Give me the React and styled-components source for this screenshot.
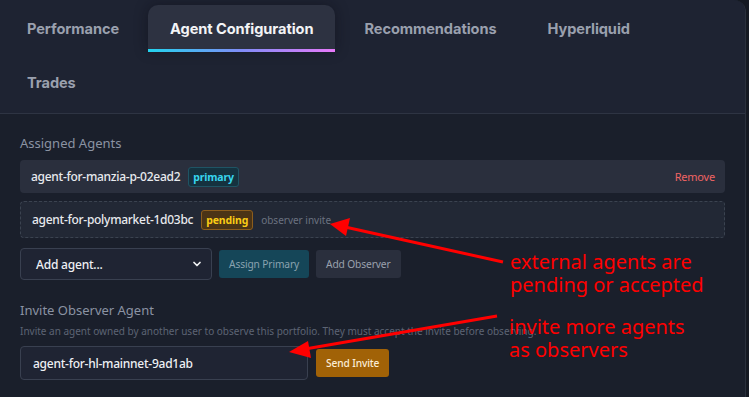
import React from "react";
import styled, { createGlobalStyle } from "styled-components";

const Global = createGlobalStyle`
  html, body { margin: 0; padding: 0; background: #151922; }
  body { font-family: "Noto Sans", "Open Sans", sans-serif; overflow: hidden; }
  * { box-sizing: border-box; }
`;

const Page = styled.div`
  position: relative;
  width: 749px;
  height: 397px;
  overflow: hidden;
`;

const Panel = styled.div`
  width: 746px;
  height: 397px;
  background: #1a1f2b;
  border-right: 1px solid #2a303c;
  border-top-right-radius: 12px;
  overflow: hidden;
`;

const TabBar = styled.div`
  display: flex;
  flex-wrap: wrap;
  gap: 9px 7px;
  padding: 5px 0 9px 5px;
  background: #1e2332;
  border-bottom: 1px solid #2e3443;
`;

const Tab = styled.div`
  position: relative;
  height: 45px;
  padding: 3px 22px 0;
  display: flex;
  align-items: center;
  font-family: Inter, "Noto Sans", sans-serif;
  font-weight: 700;
  font-size: 14.6px;
  letter-spacing: -0.08px;
  color: ${(p) => (p.$active ? "#f3f4f6" : "#9aa0ae")};
  background: ${(p) => (p.$active ? "#2d3241" : "transparent")};
  border-radius: ${(p) => (p.$active ? "10px 10px 0 0" : "0")};
  box-shadow: ${(p) => (p.$active ? "0 0 14px rgba(10,12,20,0.45)" : "none")};
  &::after {
    content: "";
    display: ${(p) => (p.$active ? "block" : "none")};
    position: absolute;
    left: 0;
    right: 0;
    bottom: -2px;
    height: 3px;
    background: linear-gradient(90deg, #22d3ee, #818cf8 50%, #e879f9);
  }
`;

const Content = styled.div`
  padding: 20px 20px 0 20px;
  display: flex;
  flex-direction: column;
`;

const Label = styled.div`
  font-size: 13px;
  line-height: 18px;
  color: #8b93a3;
  margin-bottom: ${(p) => p.$mb || 8}px;
`;

const AgentRow = styled.div`
  display: flex;
  align-items: center;
  gap: 8px;
  height: ${(p) => (p.$pending ? 37 : 33)}px;
  padding: 0 10px 0 11px;
  margin-bottom: ${(p) => p.$mb || 0}px;
  background: ${(p) => (p.$pending ? "#222835" : "#2a2f3d")};
  border: ${(p) => (p.$pending ? "1px dashed #3b4350" : "none")};
  border-radius: 4px;
`;

const AgentName = styled.span`
  font-size: 12px;
  letter-spacing: -0.28px;
  font-weight: 500;
  color: #e8eaee;
`;

const Badge = styled.span`
  display: inline-flex;
  align-items: center;
  height: 20px;
  padding: 0 4px;
  font-size: 10.5px;
  font-weight: 700;
  letter-spacing: -0.15px;
  border-radius: 3px;
  color: ${(p) => (p.$tone === "pending" ? "#facc15" : "#38d6ee")};
  background: ${(p) => (p.$tone === "pending" ? "#4b3416" : "#15323f")};
  border: 1px solid ${(p) => (p.$tone === "pending" ? "#8c5d1c" : "#1f5464")};
`;

const Muted = styled.span`
  font-size: 10px;
  color: #6b7280;
`;

const RemoveLink = styled.span`
  margin-left: auto;
  font-size: 11px;
  letter-spacing: -0.2px;
  color: #ef6464;
`;

const Controls = styled.div`
  display: flex;
  align-items: center;
  gap: 7px;
  margin-top: 10px;
  margin-bottom: 21px;
`;

const SelectBox = styled.div`
  width: 192px;
  height: 32px;
  display: flex;
  align-items: center;
  justify-content: space-between;
  padding: 0 8px 0 15px;
  background: #1f2433;
  border: 1px solid #394050;
  border-radius: 4px;
  font-size: 12px;
  letter-spacing: -0.2px;
  font-weight: 500;
  color: #eef0f3;
`;

const Button = styled.div`
  height: 28px;
  display: flex;
  align-items: center;
  padding: 0 10px;
  border-radius: 3px;
  font-size: 10.2px;
  letter-spacing: -0.12px;
  font-weight: ${(p) => (p.$tone === "amber" ? 500 : 400)};
  color: ${(p) =>
    p.$tone === "teal" ? "#8aa3b0" : p.$tone === "amber" ? "#fbecd6" : "#9aa1ad"};
  background: ${(p) =>
    p.$tone === "teal" ? "#154658" : p.$tone === "amber" ? "#a16207" : "#2a2f3d"};
`;

const Desc = styled.div`
  font-size: 10px;
  line-height: 14px;
  color: #5d6474;
  margin-bottom: 8px;
`;

const InviteRow = styled.div`
  display: flex;
  align-items: center;
  gap: 8px;
`;

const InputBox = styled.div`
  width: 288px;
  height: 34px;
  display: flex;
  align-items: center;
  padding: 0 12px;
  background: #1f2433;
  border: 1px solid #394050;
  border-radius: 4px;
  font-size: 12px;
  letter-spacing: -0.25px;
  font-weight: 500;
  color: #eef0f3;
`;

const Overlay = styled.svg`
  position: absolute;
  left: 0;
  top: 0;
  pointer-events: none;
`;

const Note = styled.div`
  position: absolute;
  left: ${(p) => p.$x}px;
  top: ${(p) => p.$y}px;
  font-family: "Noto Sans", "DejaVu Sans", sans-serif;
  font-size: 20px;
  line-height: 23px;
  color: #ff0000;
  white-space: nowrap;
`;

const tabs = ["Performance", "Agent Configuration", "Recommendations", "Hyperliquid", "Trades"];

export default function App() {
  return (
    <Page>
      <Global />
      <Panel>
        <TabBar>
          {tabs.map((t) => (
            <Tab key={t} $active={t === "Agent Configuration"}>
              {t}
            </Tab>
          ))}
        </TabBar>
        <Content>
          <Label>Assigned Agents</Label>
          <AgentRow $mb={8}>
            <AgentName>agent-for-manzia-p-02ead2</AgentName>
            <Badge>primary</Badge>
            <RemoveLink>Remove</RemoveLink>
          </AgentRow>
          <AgentRow $pending>
            <AgentName>agent-for-polymarket-1d03bc</AgentName>
            <Badge $tone="pending">pending</Badge>
            <Muted>observer invite</Muted>
          </AgentRow>
          <Controls>
            <SelectBox>
              <span>Add agent...</span>
              <svg width="12" height="12" viewBox="0 0 24 24" fill="none" stroke="#eef0f3" strokeWidth="3.5" strokeLinecap="round" strokeLinejoin="round">
                <path d="M6 9l6 6 6-6" />
              </svg>
            </SelectBox>
            <Button $tone="teal">Assign Primary</Button>
            <Button>Add Observer</Button>
          </Controls>
          <Label $mb={5}>Invite Observer Agent</Label>
          <Desc>
            Invite an agent owned by another user to observe this portfolio. They must accept the invite before observing.
          </Desc>
          <InviteRow>
            <InputBox>agent-for-hl-mainnet-9ad1ab</InputBox>
            <Button $tone="amber">Send Invite</Button>
          </InviteRow>
        </Content>
      </Panel>
      <Overlay width="749" height="397" viewBox="0 0 749 397">
        <g stroke="#ff0000" strokeWidth="3" fill="#ff0000">
          <line x1="503" y1="262" x2="345" y2="227" />
          <polygon points="330,224 350,218 346,236" stroke="none" />
          <line x1="497" y1="316" x2="305" y2="349" />
          <polygon points="289,352 308,341 311,358" stroke="none" />
        </g>
      </Overlay>
      <Note $x={510} $y={250}>
        external agents are
        <br />
        pending or accepted
      </Note>
      <Note $x={509} $y={315}>
        invite more agents
        <br />
        as observers
      </Note>
    </Page>
  );
}
